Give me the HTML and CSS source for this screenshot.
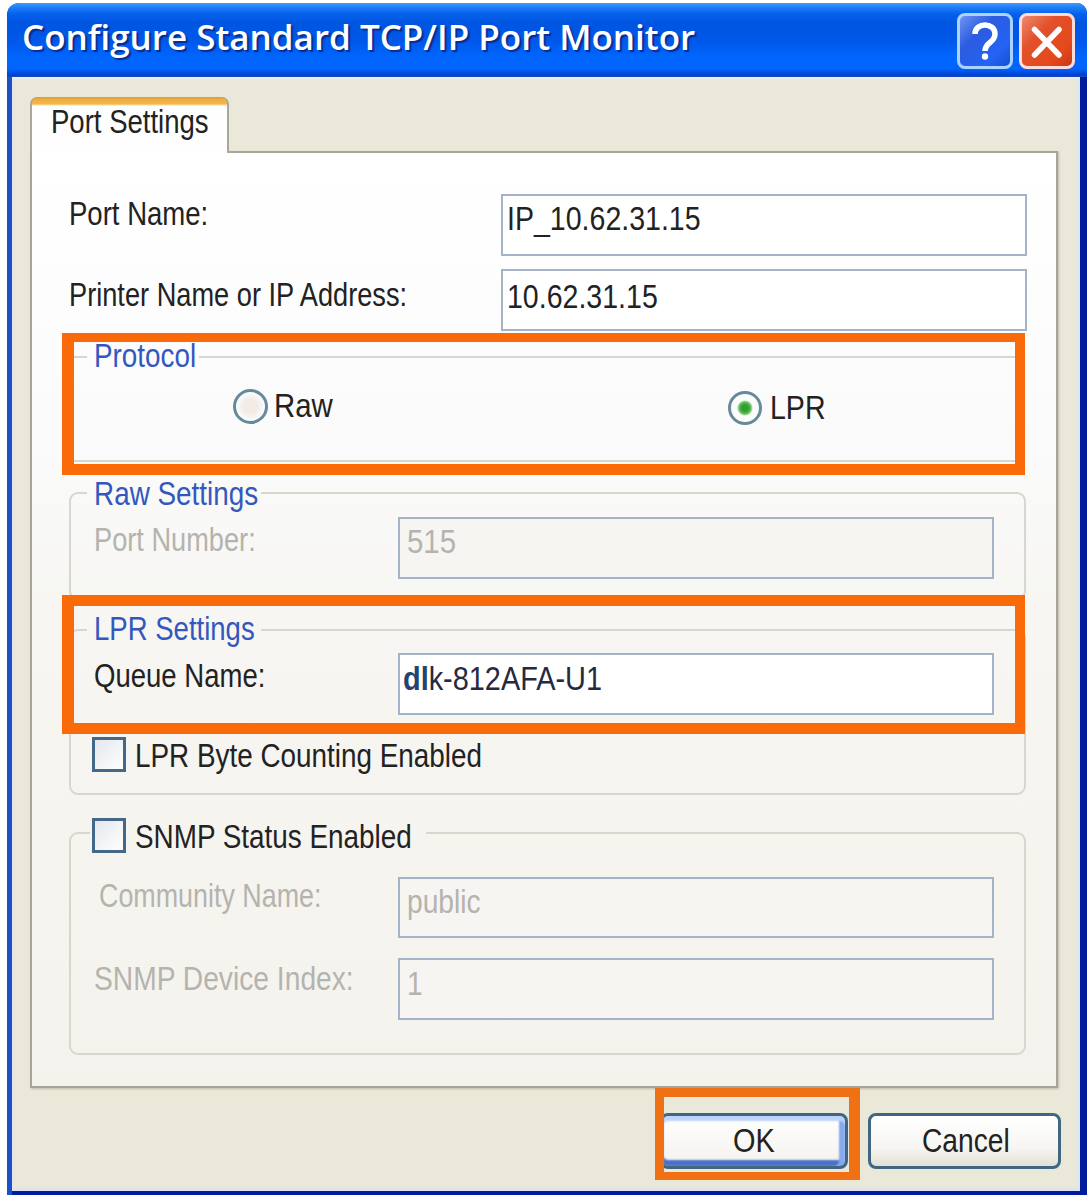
FILE: index.html
```html
<!DOCTYPE html>
<html lang="en">
<head>
<meta charset="utf-8">
<title>Configure Standard TCP/IP Port Monitor</title>
<link rel="stylesheet" href="styles.css">
</head>
<body>
<main class="window">
  <header class="titlebar">
    <h1 class="title">Configure Standard TCP/IP Port Monitor</h1>
    <div class="caption help">
      <svg viewBox="0 0 56 56"><path d="M18 21C18 9 38 9 38 21C38 30 28 29 28 38" fill="none" stroke="#fff" stroke-width="5.5"/><circle cx="28" cy="43.5" r="3.2" fill="#fff"/></svg>
    </div>
    <div class="caption close">
      <svg viewBox="0 0 56 56"><path d="M15.500 16.500L40 42M40 16.500L15.500 42" fill="none" stroke="#fff" stroke-width="5.500" stroke-linecap="round"/></svg>
    </div>
  </header>
  <div class="client">
    <div class="tab"><span class="t n82">Port Settings</span></div>
    <section class="panel">
      <div class="field wide first">
        <span class="t n82">Port Name:</span>
        <div class="input"><span class="t n85">IP_10.62.31.15</span></div>
      </div>
      <div class="field wide second">
        <span class="t n81">Printer Name or IP Address:</span>
        <div class="input"><span class="t n85">10.62.31.15</span></div>
      </div>

      <fieldset class="group protocol">
        <legend><span class="t n83">Protocol</span></legend>
        <div class="radios">
          <div class="radio raw"><i class="dot"></i><span class="t n87">Raw</span></div>
          <div class="radio lpr"><i class="dot on"></i><span class="t n85">LPR</span></div>
        </div>
      </fieldset>

      <fieldset class="group raw-settings">
        <legend><span class="t n83">Raw Settings</span></legend>
        <div class="field port-number off">
          <span class="t n81">Port Number:</span>
          <div class="input"><span class="t n87">515</span></div>
        </div>
      </fieldset>

      <fieldset class="group lpr-settings">
        <legend><span class="t n82">LPR Settings</span></legend>
        <div class="field queue">
          <span class="t n82">Queue Name:</span>
          <div class="input"><span class="t n86"><b>dl</b>k-812AFA-U1</span></div>
        </div>
        <div class="check"><i class="box"></i><span class="t n83">LPR Byte Counting Enabled</span></div>
      </fieldset>

      <fieldset class="group snmp">
        <legend><i class="box"></i><span class="t n83">SNMP Status Enabled</span></legend>
        <div class="field community off">
          <span class="t n80">Community Name:</span>
          <div class="input"><span class="t n84">public</span></div>
        </div>
        <div class="field device off">
          <span class="t n84">SNMP Device Index:</span>
          <div class="input"><span class="t n84">1</span></div>
        </div>
      </fieldset>
    </section>
    <footer class="actions">
      <div class="button default"><span class="t n86">OK</span></div>
      <div class="button"><span class="t n84">Cancel</span></div>
    </footer>
  </div>
  <div class="mark mark-protocol"></div>
  <div class="mark mark-queue"></div>
  <div class="mark mark-ok"></div>
</main>
</body>
</html>
```

FILE: styles.css
```css
* { box-sizing: border-box; }
body {
  margin: 0;
  height: 1195px;
  padding: 3px 0 0 7px;
  overflow: hidden;
  background: #fff;
  font: 33.6px/42px "Liberation Sans", Arial, sans-serif;
  color: #222;
}
.window {
  position: relative;
  display: flex;
  flex-direction: column;
  width: 1080px;
  height: 1192px;
  border-radius: 12px 10px 0 0;
  background: linear-gradient(90deg, #1d50c4 0 5px, #001c9c 5px);
  overflow: hidden;
}

/* Caption bar */
.titlebar {
  display: flex;
  align-items: flex-start;
  height: 74px;
  padding: 10px 12px 0 15px;
  background: linear-gradient(#3f9bff 0, #2080f8 4px, #0560ec 11px, #0055e0 20px, #0058ea 38px, #0066ff 55px, #0064fc 66px, #0040d0 72px, #1c48b8 74px);
}
.title {
  flex: 1;
  margin: 0;
  font: 600 35px/48px "Open Sans", "Noto Sans", sans-serif;
  white-space: nowrap;
  color: #fff;
  text-shadow: 2px 2px 1px #0a2c90;
}
.caption {
  width: 56px;
  height: 56px;
  border: 3px solid #d5e6ff;
  border-radius: 8px;
}
.caption svg { display: block; width: 56px; height: 56px; margin: -3px; }
.help { margin-right: 6px; border-color: #a9d4ff; background: linear-gradient(135deg, #6f94f4, #2c5ce0 35%, #2363f4 75%, #1550d0); }
.close { border-color: #ffdcd8; background: linear-gradient(135deg, #ee8a70, #e2502c 35%, #e4491c 75%, #c23a14); }

.client {
  flex: none;
  width: 1068px;
  height: 1114px;
  margin-left: 5px;
  padding: 20px 0 0 18px;
  background: #eae8d8;
  box-shadow: inset 0 2px 1px #e8ecf4, inset 2px 0 1px #dfe6f2, inset -3px 0 2px #dfe4f4, inset 0 -3px 2px #dde2f2;
}
.tab {
  position: relative;
  z-index: 1;
  width: 199px;
  height: 56px;
  margin-bottom: -2px;
  padding: 0 0 0 18px;
  border: solid #a8a89c;
  border-width: 0 2px;
  border-radius: 7px 7px 0 0;
  background: linear-gradient(#dc9c3c 0, #f0b040 3px, #f4b848 7px, #fefefe 9px);
}
.tab .t { margin-top: 4px; }
.panel {
  width: 1028px;
  height: 937px;
  padding: 40px 0 0 36px;
  border: 2px solid #a5a59c;
  background: linear-gradient(#fff 0, #fdfdfe 15%, #fafafa 33%, #f7f6f2 50%, #f6f4ef 75%, #f5f3ee 92%, #f3f2ec);
  box-shadow: 1px 1px 2px #bdbcae;
}

.t { display: inline-block; margin-left: 1px; white-space: nowrap; transform-origin: 0 0; transform: scaleX(.83); }
.n80 { transform: scaleX(.8); }
.n81 { transform: scaleX(.81); }
.n82 { transform: scaleX(.82); }
.n83 { transform: scaleX(.83); }
.n84 { transform: scaleX(.84); }
.n85 { transform: scaleX(.85); }
.n86 { transform: scaleX(.86); }
.n87 { transform: scaleX(.875); }

.field {
  display: grid;
  grid-template-columns: 305px 596px;
  align-items: start;
  padding-left: 22px;
}
.field > .t { min-width: 0; }
.input { height: 62px; padding: 2px 0 0 6px; border: 2px solid #a3b4c8; background: #fff; }
.wide { grid-template-columns: 433px 526px; padding-left: 0; }
.wide .input { padding-left: 3px; }
.first { height: 62px; }
.first .input { margin-top: 1px; }
.second { margin-top: 14px; height: 62px; }
.second > .t { margin-top: 5px; }
.second .input { padding-top: 5px; }
.off { color: #b5b3ae; }
.off .input { background: #f6f5f2; }

.group {
  width: 957px;
  min-width: 0;
  margin: 0 0 0 1px;
  padding: 0;
  border: 2px solid #d7d6cf;
  border-radius: 9px;
}
legend {
  display: flex;
  height: 44px;
  margin-left: 16px;
  padding: 0 0 0 6px;
  color: #3358bd;
}
.protocol { width: 950px; height: 127px; margin-top: 4px; border-radius: 0; }
.protocol legend { width: 112px; }
.raw-settings { height: 129px; margin-top: 9px; }
.raw-settings legend { width: 174px; padding-top: 2px; }
.lpr-settings { height: 187px; margin-top: 8px; }
.lpr-settings legend { width: 174px; }
.snmp { height: 244px; margin-top: 16px; }
.snmp legend { width: 336px; margin-left: 19px; padding: 5px 0 0 2px; color: #222; }

.radios { display: grid; grid-template-columns: 495px 200px; padding-left: 162px; }
.radio { display: flex; gap: 5px; padding-top: 6px; }
.radio.lpr { padding-top: 8px; gap: 7px; }
.dot {
  flex: none;
  width: 35px;
  height: 35px;
  margin-top: 4px;
  border: 3px solid #66899c;
  border-radius: 50%;
  background: radial-gradient(circle, #f3ece6 35%, #fafdff 70%);
}
.dot.on { width: 34px; height: 34px; background: radial-gradient(circle, #2f9f2f 0 3px, #62bd5c 6px, #fbfdfb 8px); }

.port-number { padding-top: 2px; }
.port-number > .t { margin-top: 2px; }
.queue { padding-top: 1px; }
.queue > .t { margin-top: 2px; }
.queue .input { padding: 3px 0 0 2px; color: #262a40; }
.queue b { font-weight: bold; color: #24446c; }
.box {
  flex: none;
  width: 34px;
  height: 35px;
  border: 3px solid #44688a;
  background: linear-gradient(135deg, #e3e7ec, #fff);
}
.check { display: flex; gap: 8px; margin-top: 20px; padding-left: 21px; }
.check .box { margin-top: 2px; }
.snmp .box { margin: 2px 8px 0 0; }
.community { padding-top: 22px; }
.community > .t { margin: -2px 0 0 6px; }
.community .input { height: 61px; }
.device { margin-top: 20px; }
.device .input { padding-top: 3px; }

.actions { display: flex; gap: 20px; padding: 25px 0 0 630px; }
.button {
  display: flex;
  width: 193px;
  height: 56px;
  padding: 4px 0 0 50px;
  border: 3px solid #416682;
  border-radius: 8px;
  background: linear-gradient(#fff, #f6f5f2 65%, #e4dfd6);
}
.default {
  width: 188px;
  padding-left: 69px;
  background: linear-gradient(#fff, #f4f2ee);
  box-shadow: inset 0 5px 2px #bfd3fa, inset -6px 0 2px #86a8ec, inset 0 -6px 2px #4a6fc8;
}

/* Highlight frames drawn over the dialog */
.mark { position: absolute; z-index: 2; border: solid #fa6a08; }
.mark-protocol { left: 55px; top: 330px; width: 963px; height: 142px; border-width: 9px 10px 11px 12px; }
.mark-queue { left: 55px; top: 592px; width: 963px; height: 139px; border-width: 11px 10px 11px 12px; }
.mark-ok { left: 648px; top: 1085px; width: 205px; height: 92px; border-width: 9px 11px 8px 9px; border-color: #f07014; }
```
